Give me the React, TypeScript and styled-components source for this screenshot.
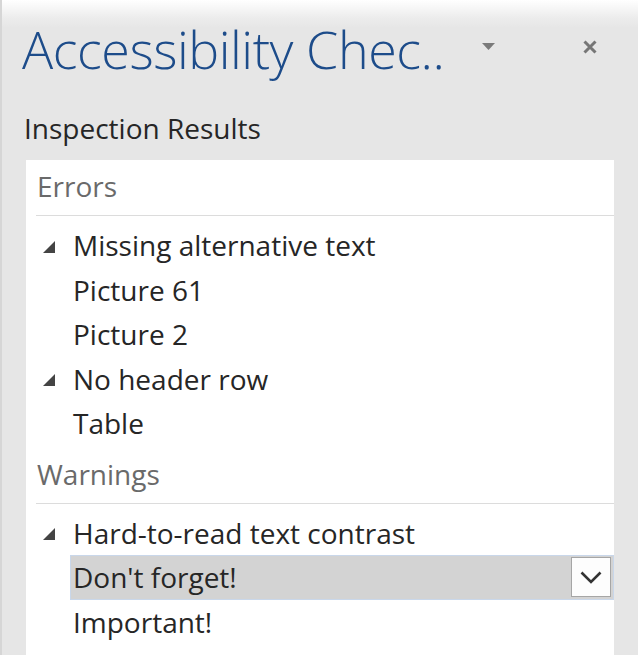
import React from "react";
import styled, { createGlobalStyle } from "styled-components";

const GlobalStyle = createGlobalStyle`
  html, body { margin: 0; padding: 0; }
  body {
    background: #e6e6e6;
    font-family: "Open Sans", "Noto Sans", sans-serif;
    overflow: hidden;
  }
`;

const Pane = styled.div`
  height: 655px;
  display: flex;
  flex-direction: column;
  background: linear-gradient(#ffffff 0px, #ececec 18px, #e6e6e6 28px);
  box-shadow: inset 2px 0 0 #d6d6d6;
  overflow: hidden;
`;

const TitleBar = styled.div`
  display: flex;
  align-items: flex-start;
  padding: 18px 0 0 22px;
  height: 80px;
  box-sizing: border-box;
`;

const Title = styled.h1`
  margin: 0;
  font-family: "Open Sans", sans-serif;
  font-weight: 300;
  font-size: 52px;
  line-height: 62px;
  color: #1d4c8a;
  letter-spacing: -0.45px;
  white-space: nowrap;
  width: 458px;
`;

const IconButton = styled.div<{ $left: number; $top: number }>`
  margin-left: ${(p) => p.$left}px;
  margin-top: ${(p) => p.$top}px;
  display: flex;
`;

const SectionLabel = styled.div`
  margin: 30px 0 0 24px;
  font-size: 28px;
  line-height: 36px;
  color: #262626;
`;

const Results = styled.div`
  margin: 14px 24px 0 26px;
  background: #ffffff;
  flex: 1;
`;

const GroupHeader = styled.div`
  margin-left: 10px;
  padding-left: 1px;
  height: 55px;
  line-height: 53px;
  font-size: 28px;
  color: #6a6a6a;
  border-bottom: 1px solid #dcdcdc;
`;

const List = styled.div`
  padding: 7px 0 2px;
`;

const Row = styled.div`
  display: flex;
  align-items: center;
  height: 44.5px;
  line-height: 44px;
  font-size: 28px;
  color: #262626;
  white-space: nowrap;
  box-sizing: border-box;
  padding-left: 47px;
`;

const SelectedRow = styled.div`
  display: flex;
  align-items: center;
  margin-left: 44px;
  height: 44.5px;
  box-sizing: border-box;
  background: #d3d3d3;
  border: 1px solid #c9d7ea;
  padding: 0 2px 0 2px;
  font-size: 28px;
  color: #262626;
  line-height: 42px;
`;

const Label = styled.span`
  flex: 1;
`;

const Expander = styled.span`
  display: flex;
  width: 30px;
  margin-left: -30px;
  padding-top: 3px;
`;

const DropButton = styled.div`
  width: 40px;
  height: 40px;
  box-sizing: border-box;
  background: #fdfdfd;
  border: 1px solid #a6a6a6;
  display: flex;
  align-items: center;
  justify-content: center;
`;

const Triangle = () => (
  <svg width="12" height="12" viewBox="0 0 12 12">
    <polygon points="12,0 12,12 0,12" fill="#444444" />
  </svg>
);

const TreeRow = ({ text, parent }: { text: string; parent?: boolean }) => (
  <Row>
    {parent && (
      <Expander>
        <Triangle />
      </Expander>
    )}
    <Label>{text}</Label>
  </Row>
);

export default function App() {
  return (
    <>
      <GlobalStyle />
      <Pane>
        <TitleBar>
          <Title>Accessibility Chec..</Title>
          <IconButton $left={2} $top={25}>
            <svg width="13" height="8" viewBox="0 0 13 8">
              <polygon points="0,0 13,0 6.5,7" fill="#7a7a7a" />
            </svg>
          </IconButton>
          <IconButton $left={88} $top={22}>
            <svg width="14" height="14" viewBox="0 0 14 14">
              <path d="M1.5 1.5 L12.5 12.5 M12.5 1.5 L1.5 12.5" stroke="#767676" strokeWidth="3" />
            </svg>
          </IconButton>
        </TitleBar>
        <SectionLabel>Inspection Results</SectionLabel>
        <Results>
          <GroupHeader>Errors</GroupHeader>
          <List>
            <TreeRow parent text="Missing alternative text" />
            <TreeRow text="Picture 61" />
            <TreeRow text="Picture 2" />
            <TreeRow parent text="No header row" />
            <TreeRow text="Table" />
          </List>
          <GroupHeader>Warnings</GroupHeader>
          <List>
            <TreeRow parent text="Hard-to-read text contrast" />
            <SelectedRow>
              <Label>Don't forget!</Label>
              <DropButton>
                <svg width="22" height="13" viewBox="0 0 22 13">
                  <path d="M1.5 1.5 L11 11 L20.5 1.5" fill="none" stroke="#333333" strokeWidth="2.6" />
                </svg>
              </DropButton>
            </SelectedRow>
            <TreeRow text="Important!" />
          </List>
        </Results>
      </Pane>
    </>
  );
}
